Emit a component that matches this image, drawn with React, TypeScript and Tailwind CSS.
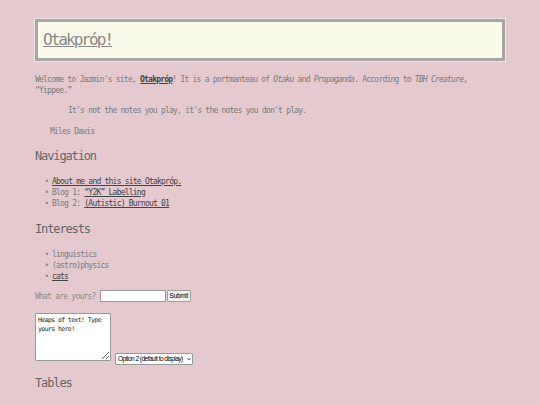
const body = "text-[8px] leading-[11px] tracking-[-0.777px] text-[#7b7b7b]";
const heading = "text-[12px] leading-[16px] tracking-[-1.13px] text-[#666666]";
const link = "text-[#444444] underline";

function Header() {
  return (
    <div className="h-[42px] border-[3px] border-[#a6a6a6] shadow-[0_0_0_1px_#eee4e6] bg-[#fafaeb] px-[5px] flex items-center">
      <a className="text-[16px] leading-[20px] tracking-[-1.96px] text-[#8a8a8a] underline">Otakpróp!</a>
    </div>
  );
}

function Item({ children }: { children: React.ReactNode }) {
  return (
    <li className="flex">
      <span className="w-[5px] mr-[3px] text-center text-[#8a8a8a]">•</span>
      <span>{children}</span>
    </li>
  );
}

export default function App() {
  return (
    <div className="min-h-screen bg-[#e4c9cf] font-['DejaVu_Sans_Mono',monospace]">
      <div className="mx-auto w-[470px] pt-[19px] pb-4">
        <Header />

        <p className={`${body} mt-[13px]`}>
          Welcome to Jazmin's site, <a className={`${link} font-bold`}>Otakpróp</a>! It is a portmanteau of{' '}
          <em>Otaku</em> and <em>Propaganda</em>. According to <em>TBH Creature</em>,<br />
          “Yippee.”
        </p>

        <blockquote className={`${body} mt-[9px] ml-[33px]`}>
          It's not the notes you play, it's the notes you don't play.
        </blockquote>
        <p className={`${body} mt-[10px] ml-[15px]`}>Miles Davis</p>

        <h2 className={`${heading} mt-[11px]`}>Navigation</h2>
        <ul className={`${body} mt-[12px] pl-[9px]`}>
          <Item>
            <a className={link}>About me and this site Otakpróp.</a>
          </Item>
          <Item>
            Blog 1: <a className={link}>“Y2K” Labelling</a>
          </Item>
          <Item>
            Blog 2: <a className={link}>(Autistic) Burnout 01</a>
          </Item>
        </ul>

        <h2 className={`${heading} mt-[12px]`}>Interests</h2>
        <ul className={`${body} mt-[12px] pl-[9px]`}>
          <Item>linguistics</Item>
          <Item>(astro)physics</Item>
          <Item>
            <a className={link}>cats</a>
          </Item>
        </ul>

        <div className="mt-[8px] flex items-center h-[12px]">
          <label className={`${body} text-[#8a8a8a]`}>What are yours?</label>
          <input
            type="text"
            className="ml-[4px] w-[66px] h-[12px] bg-white border border-[#9a9a9a] outline-none"
          />
          <button className="ml-[1px] h-[12px] px-[2px] bg-[#efefef] border border-[#a0a0a0] rounded-[1px] text-[6.5px] leading-[10px] text-black font-['Liberation_Sans',Arial,sans-serif] tracking-[-0.3px]">
            Submit
          </button>
        </div>

        <div className="mt-[11px] flex items-end gap-[4px]">
          <textarea
            defaultValue={"Heaps of text! Type yours here!"}
            className="w-[76px] h-[48px] mb-[4px] bg-white border border-[#9a9a9a] rounded-[1px] px-[2px] py-[2px] text-[6.5px] leading-[9px] tracking-[-0.6px] text-[#222] font-['DejaVu_Sans_Mono',monospace] outline-none"
          />
          <div className="relative flex">
            <select
              defaultValue="2"
              className="appearance-none h-[12px] w-[78px] pl-[2px] pr-[7px] bg-white border border-[#9a9a9a] rounded-[1px] text-[6.6px] leading-[10px] tracking-[-0.55px] text-black font-['Liberation_Sans',Arial,sans-serif] outline-none"
            >
              <option value="1">Option 1</option>
              <option value="2">Option 2 (default to display)</option>
              <option value="3">Option 3</option>
            </select>
            <svg
              viewBox="0 0 10 10"
              className="absolute right-[2px] top-[4px] w-[4px] h-[4px] pointer-events-none"
            >
              <path d="M1 3 L5 7 L9 3" fill="none" stroke="#222" strokeWidth="2.2" />
            </svg>
          </div>
        </div>

        <h2 className={`${heading} mt-[10px]`}>Tables</h2>
      </div>
    </div>
  );
}
